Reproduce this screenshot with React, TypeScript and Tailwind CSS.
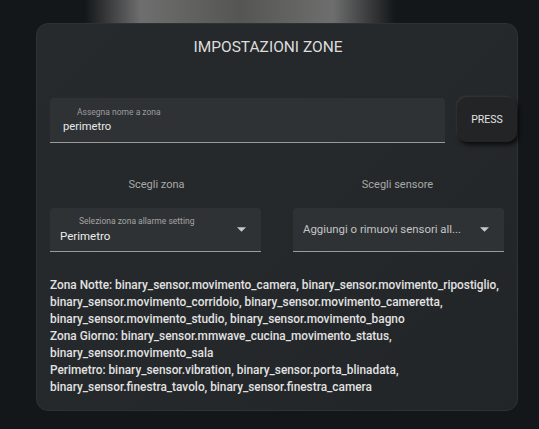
import React from "react";

const ArrowDown: React.FC = () => (
  <svg width="9" height="5" viewBox="0 0 10 5" className="fill-[#c8c8c8]">
    <path d="M0 0 L10 0 L5 5 Z" />
  </svg>
);

const App: React.FC = () => {
  return (
    <div
      className="relative w-[539px] h-[429px] overflow-hidden bg-[#141719]"
      style={{ fontFamily: "Roboto, 'Liberation Sans', sans-serif" }}
    >
      {/* top glow */}
      <div className="absolute left-[85px] top-0 w-[310px] h-[30px] bg-[linear-gradient(90deg,rgba(20,23,25,0)_0%,#6e6e6e_18%,#555553_50%,#6e6e6e_80%,rgba(20,23,25,0)_100%)]" />
      <div className="relative pt-[23px] pl-[36px]">
        <div className="w-[482px] h-[388px] rounded-[12px] bg-[linear-gradient(135deg,#272a2c,#25282a_60%,#222527)] border border-[#2f3234] flex flex-col">
          <h1 className="text-center text-[15.5px] text-[#dddddd] mt-[12px] leading-[22px] pr-[18px]">
            IMPOSTAZIONI ZONE
          </h1>

          <div className="flex items-start mt-[40px] pl-[13px]">
            <div className="w-[395px] h-[45px] bg-[#2f3234] rounded-t-[4px] border-b border-[#9a9a9a] flex flex-col pl-[13px]">
              <span className="text-[8.5px] text-[#9c9c9c] mt-[9px] pl-[14px] leading-[11px]">
                Assegna nome a zona
              </span>
              <span className="text-[11.2px] text-[#e8e8e8] leading-[16px] mt-[1px]">
                perimetro
              </span>
            </div>
            <button className="ml-[12px] -mt-[1px] w-[60px] h-[45px] rounded-[10px] bg-[#222426] shadow-[2px_3px_4px_rgba(0,0,0,0.7),-1px_-1px_2px_rgba(90,90,90,0.35)] text-[10.5px] text-[#e4e4e4]">
              PRESS
            </button>
          </div>

          <div className="flex mt-[34px] pl-[13px]">
            <div className="w-[211px] flex flex-col">
              <div className="text-center text-[11px] text-[#a8a8a8] leading-[16px] ml-[2px]">
                Scegli zona
              </div>
              <div className="mt-[15px] h-[44px] bg-[#2f3234] rounded-t-[4px] border-b border-[#9a9a9a] flex items-center pl-[10px] pr-[15px]">
                <div className="flex flex-col flex-1">
                  <span className="text-[8.5px] text-[#a4a4a4] pl-[19px] leading-[11px]">
                    Seleziona zona allarme setting
                  </span>
                  <span className="text-[11.5px] text-[#ececec] leading-[16px] mt-[1px]">
                    Perimetro
                  </span>
                </div>
                <ArrowDown />
              </div>
            </div>
            <div className="w-[211px] ml-[32px] flex flex-col">
              <div className="text-center text-[11px] text-[#a8a8a8] leading-[16px] -ml-[2px]">
                Scegli sensore
              </div>
              <div className="mt-[15px] h-[44px] bg-[#2f3234] rounded-t-[4px] border-b border-[#9a9a9a] flex items-center pl-[10px] pr-[15px]">
                <span className="flex-1 text-[11.4px] text-[#c4c4c4] truncate">
                  Aggiungi o rimuovi sensori all...
                </span>
                <ArrowDown />
              </div>
            </div>
          </div>

          <div className="mt-[25px] pl-[13px] pr-[4px] text-[11.85px] font-medium text-[#e2e2e2] leading-[17px]">
            <div>Zona Notte: binary_sensor.movimento_camera, binary_sensor.movimento_ripostiglio,</div>
            <div>binary_sensor.movimento_corridoio, binary_sensor.movimento_cameretta,</div>
            <div>binary_sensor.movimento_studio, binary_sensor.movimento_bagno</div>
            <div>Zona Giorno: binary_sensor.mmwave_cucina_movimento_status,</div>
            <div>binary_sensor.movimento_sala</div>
            <div>Perimetro: binary_sensor.vibration, binary_sensor.porta_blinadata,</div>
            <div>binary_sensor.finestra_tavolo, binary_sensor.finestra_camera</div>
          </div>
        </div>
      </div>
    </div>
  );
};

export default App;
